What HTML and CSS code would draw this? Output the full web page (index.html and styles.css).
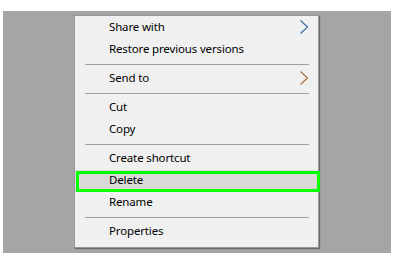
FILE: index.html
```html
<!DOCTYPE html>
<html lang="en">
  <head>
    <meta charset="UTF-8" />
    <title>Context menu</title>
    <link rel="stylesheet" href="styles.css">
  </head>
  <body>
    <div class="backdrop">
      <ul class="menu">
        <li class="item">
          Share with
          <svg class="arrow" width="10" height="14" viewBox="0 0 10 14"><polyline points="1.5,0.5 8.5,7 1.5,13.5" fill="none" stroke="#3d6fa6" stroke-width="1.2"/></svg>
        </li>
        <li class="item">Restore previous versions</li>
        <li class="sep"></li>
        <li class="item">
          Send to
          <svg class="arrow" width="10" height="14" viewBox="0 0 10 14"><polyline points="1.5,0.5 8.5,7 1.5,13.5" fill="none" stroke="#a8703e" stroke-width="1.2"/></svg>
        </li>
        <li class="sep"></li>
        <li class="item">Cut</li>
        <li class="item">Copy</li>
        <li class="sep"></li>
        <li class="item">Create shortcut</li>
        <li class="item selected">Delete</li>
        <li class="item">Rename</li>
        <li class="sep"></li>
        <li class="item">Properties</li>
      </ul>
    </div>
  </body>
</html>
```

FILE: styles.css
```css
body {
  margin: 0;
  background: #ffffff;
  font-family: "Noto Sans", "Open Sans", sans-serif;
  font-size: 11.5px;
  letter-spacing: -0.15px;
  color: #000000;
}
.backdrop {
  margin: 11px 0 0 3px;
  width: 388px;
  height: 242px;
  background: #a5a5a5;
  padding-top: 4px;
  box-sizing: border-box;
}
.menu {
  list-style: none;
  margin: 0 0 0 71px;
  padding: 1px 0 4px 0;
  width: 243px;
  background: #f0f0f0;
  border: 1px solid #979797;
  box-shadow: 1px 1px 1px rgba(0, 0, 0, 0.35);
}
.item {
  position: relative;
  box-sizing: border-box;
  height: 22px;
  padding: 0 0 4px 34px;
  display: flex;
  align-items: center;
}
.arrow {
  position: absolute;
  right: 9px;
  top: 3px;
}
.sep {
  height: 1px;
  margin: 3px 9px 3px 10px;
  background: #a0a0a0;
}
.selected {
  background: #d9d9d9;
}
.selected::after {
  content: "";
  position: absolute;
  left: 1px;
  right: -2px;
  top: 1px;
  bottom: 0;
  border: 3px solid #00ff00;
}
```
